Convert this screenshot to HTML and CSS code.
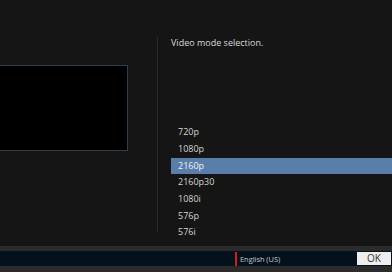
FILE: index.html
```html
<html>
<head>
    <title>Video mode</title>
    <link rel="stylesheet" href="styles.css">
</head>
<body>
    <div class="screen">
        <div class="main">
            <!-- Preview area -->
            <div class="preview-col">
                <div class="preview"></div>
            </div>
            <div class="divider"></div>

            <!-- Mode list -->
            <div class="panel">
                <div class="title">Video mode selection.</div>
                <ul class="modes">
                    <li>720p</li>
                    <li>1080p</li>
                    <li class="selected">2160p</li>
                    <li>2160p30</li>
                    <li>1080i</li>
                    <li>576p</li>
                    <li>576i</li>
                </ul>
            </div>
        </div>

        <div class="footer">
            <div class="lang"><span class="lang-mark"></span>English (US)</div>
            <button class="ok">OK</button>
        </div>
    </div>
</body>
</html>
```

FILE: styles.css
```css
body {
    margin: 0;
    background-color: #151515;
    font-family: 'Open Sans', 'Noto Sans', sans-serif;
    color: #dcdcdc;
}

.screen {
    display: flex;
    flex-direction: column;
    width: 392px;
    height: 272px;
    overflow: hidden;
}

.main {
    display: flex;
    height: 246px;
}

.preview-col {
    width: 157px;
}

.preview {
    width: 127px;
    height: 84px;
    margin-top: 65px;
    background-color: #000;
    border: 1px solid #2c3d4c;
    border-left: none;
}

.divider {
    width: 1px;
    margin: 37px 0 13px;
    background-color: #2a2a2a;
}

.panel {
    flex: 1;
    display: flex;
    flex-direction: column;
    padding-left: 13px;
}

.title {
    margin-top: 36px;
    font-size: 9px;
    line-height: 14px;
    color: #d8d8d8;
}

.modes {
    list-style: none;
    margin: auto 0 0;
    padding: 0 0 5px;
}

.modes li {
    height: 16.7px;
    line-height: 16.7px;
    padding-left: 7px;
    font-size: 9px;
    color: #d4d4d4;
}

.modes li.selected {
    background-color: #5a7eac; /* highlighted row */
    color: #f2f2f2;
}

.footer {
    display: flex;
    align-items: center;
    height: 15px;
    padding-right: 1px;
    background-color: #04101b;
    border-top: 5px solid #2b2b2b;
    border-bottom: 6px solid #2b2b2b;
}

.lang {
    display: flex;
    align-items: center;
    margin-left: 235px;
    flex: 1;
    font-size: 7.4px;
    color: #c8c8c8;
}

.lang-mark {
    width: 2px;
    height: 14px;
    margin-right: 3px;
    background-color: #d21b1b;
}

.ok {
    width: 34px;
    height: 13px;
    padding: 0;
    border: none;
    background-color: #eeeeee;
    font-family: 'Open Sans', 'Noto Sans', sans-serif;
    font-size: 10px;
    line-height: 13px;
    color: #333;
}
```
